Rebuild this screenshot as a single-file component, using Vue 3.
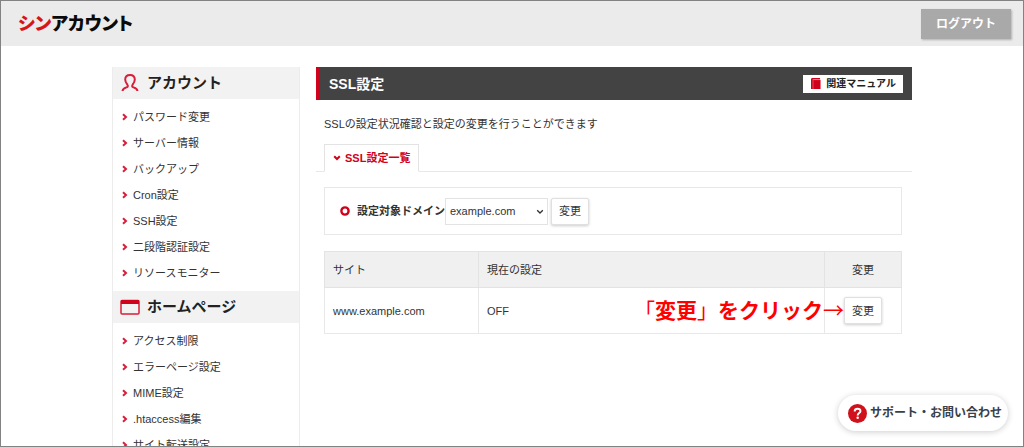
<script setup>
import { ref } from 'vue'

const domain = ref('example.com')
const groups = [
  {
    title: 'アカウント',
    icon: 'person',
    items: ['パスワード変更', 'サーバー情報', 'バックアップ', 'Cron設定', 'SSH設定', '二段階認証設定', 'リソースモニター'],
  },
  {
    title: 'ホームページ',
    icon: 'window',
    items: ['アクセス制限', 'エラーページ設定', 'MIME設定', '.htaccess編集', 'サイト転送設定'],
  },
]
const sites = [{ name: 'www.example.com', status: 'OFF' }]
</script>

<template>
  <div class="page">
    <header class="topbar">
      <a href="#" class="logo"><span class="logo-red">シン</span>アカウント</a>
      <button type="button" class="logout">ログアウト</button>
    </header>

    <div class="container">
      <nav class="sidebar">
        <section v-for="g in groups" :key="g.title">
          <h2 class="group-title">
            <svg v-if="g.icon === 'person'" class="group-icon" viewBox="0 0 20 20" fill="none" stroke="#d81e3a" stroke-width="2">
              <path d="M2.500 18C2.800 15.600 4.500 15.100 6.700 14.300C8.200 13.700 8.100 12.500 7.300 11.500C6.200 10.200 5.200 9 5.200 6.600C5.200 3.600 7 2 10 2C13 2 14.800 3.600 14.800 6.600C14.800 9 13.800 10.200 12.700 11.500C11.900 12.500 11.800 13.700 13.300 14.300C15.500 15.100 17.200 15.600 17.500 18" />
            </svg>
            <svg v-else class="group-icon" viewBox="0 0 20 20">
              <rect x="1" y="3.500" width="18" height="13.500" rx="1" fill="none" stroke="#d81e3a" stroke-width="1.500" />
              <path d="M1 3h18v4H1z" fill="#d0021b" />
            </svg>
            {{ g.title }}
          </h2>
          <ul class="menu">
            <li v-for="item in g.items" :key="item">
              <a href="#">
                <svg class="arrow" viewBox="0 0 6 8" fill="none" stroke="#d81e3a" stroke-width="2"><path d="M1 1.200L4 4L1 6.800" /></svg>
                {{ item }}
              </a>
            </li>
          </ul>
        </section>
      </nav>

      <main class="main">
        <div class="title-bar">
          <h1>SSL設定</h1>
          <a href="#" class="manual">
            <svg class="book" viewBox="0 0 11 12">
              <path d="M1.500 0H10v1.500H2.500v.7H10.500V12H0V1.500Q0 0 1.500 0Z" fill="#d0021b" />
              <path d="M2.200 2.400V12M1.500 1.800H10" stroke="#f08a94" stroke-width=".6" />
            </svg>
            関連マニュアル
          </a>
        </div>
        <p class="lead">SSLの設定状況確認と設定の変更を行うことができます</p>

        <div class="tabs">
          <a href="#list" class="tab">
            <svg class="down" viewBox="0 0 8 6" fill="none" stroke="#d0021b" stroke-width="2"><path d="M1.200 1.200L4 4L6.800 1.200" /></svg>
            SSL設定一覧
          </a>
        </div>

        <div id="list" class="content">
          <form class="filter" @submit.prevent>
            <svg class="ring" viewBox="0 0 10 10"><circle cx="5" cy="5" r="3.600" fill="none" stroke="#d0021b" stroke-width="2.400" /></svg>
            <label for="domain">設定対象ドメイン</label>
            <span class="select-wrap">
              <select id="domain" v-model="domain">
                <option>example.com</option>
              </select>
              <svg class="caret" viewBox="0 0 8 6" fill="none" stroke="#333" stroke-width="1.300"><path d="M1.200 1.200L4 4L6.800 1.200" /></svg>
            </span>
            <button type="submit" class="btn">変更</button>
          </form>

          <table class="sites">
            <thead>
              <tr>
                <th class="col-site">サイト</th>
                <th>現在の設定</th>
                <th class="col-action">変更</th>
              </tr>
            </thead>
            <tbody>
              <tr v-for="s in sites" :key="s.name">
                <td>{{ s.name }}</td>
                <td>{{ s.status }}</td>
                <td class="col-action">
                  <span class="action">
                    <span class="note">「<b>変更</b>」<b>をクリック</b>→</span>
                    <button type="button" class="btn">変更</button>
                  </span>
                </td>
              </tr>
            </tbody>
          </table>
        </div>
      </main>
    </div>

    <a href="#" class="support">
      <svg class="help" viewBox="0 0 20 20">
        <circle cx="10" cy="10" r="10" fill="#d0111b" />
        <path d="M7 7.800C7 5.900 8.200 4.900 10 4.900C11.900 4.900 13.100 6 13.100 7.500C13.100 9.500 10.200 9.600 10.200 12" fill="none" stroke="#fff" stroke-width="2.100" />
        <circle cx="10.200" cy="14.500" r="1.300" fill="#fff" />
      </svg>
      サポート・お問い合わせ
    </a>
  </div>
</template>

<style>
body {
  margin: 0;
}
</style>

<style scoped>
.page {
  position: relative;
  box-sizing: border-box;
  height: 100vh;
  overflow: hidden;
  border: 1px solid #828282;
  background: #fff;
  color: #333;
  font-family: "Liberation Sans", "Noto Sans CJK JP", sans-serif;
  font-size: 11px;
  line-height: 16px;
}
a {
  color: inherit;
  text-decoration: none;
}
button,
select {
  font: inherit;
  color: inherit;
}
.topbar {
  display: flex;
  align-items: center;
  justify-content: space-between;
  height: 45px;
  padding: 0 12px 0 17px;
  background: #ebebeb;
}
.logo {
  color: #0a0a0a;
  font-size: 18px;
  font-weight: 900;
  font-feature-settings: "palt";
  line-height: 24px;
}
.logo-red {
  color: #d7141a;
}
.logout {
  width: 90px;
  height: 30px;
  padding: 0;
  border: 0;
  background: #a9a9a9;
  box-shadow: 1px 1px 2px rgba(0, 0, 0, 0.25);
  color: #fff;
  font-size: 12px;
  font-weight: bold;
}
.container {
  display: flex;
  align-items: flex-start;
  gap: 16px;
  max-width: 800px;
  margin: 21px auto 0;
}
.sidebar {
  box-sizing: border-box;
  flex: 0 0 188px;
  border: solid #ececec;
  border-width: 0 1px;
}
.group-title {
  display: flex;
  align-items: center;
  gap: 7px;
  height: 32px;
  margin: 0;
  padding: 0 7px;
  background: #f2f2f2;
  color: #222;
  font-size: 15px;
  font-weight: bold;
}
.group-icon {
  width: 20px;
  height: 20px;
}
.menu {
  margin: 0;
  padding: 5px 0;
  list-style: none;
}
.menu a {
  display: flex;
  align-items: center;
  gap: 5px;
  padding: 0 9px;
  line-height: 26px;
}
.arrow {
  width: 6px;
  height: 8px;
}
.main {
  flex: 1;
  min-width: 0;
}
.title-bar {
  display: flex;
  align-items: center;
  justify-content: space-between;
  height: 33px;
  padding: 0 9px;
  border-left: 4px solid #d0021b;
  background: #434343;
}
.title-bar h1 {
  margin: 0;
  color: #fff;
  font-size: 14px;
  font-weight: bold;
}
.manual {
  display: flex;
  align-items: center;
  gap: 5px;
  padding: 1px 7px 1px 8px;
  background: #fff;
  color: #222;
  font-size: 10px;
  font-weight: bold;
}
.book {
  width: 10px;
  height: 11px;
}
.lead {
  margin: 16px 8px 12px;
}
.tabs {
  display: flex;
  padding: 0 8px;
  border-bottom: 1px solid #e8e8e8;
}
.tab {
  display: flex;
  align-items: center;
  gap: 4px;
  height: 26px;
  margin-bottom: -1px;
  padding: 0 8px;
  border: 1px solid #e3e3e3;
  border-bottom-color: #fff;
  background: #fff;
  color: #d0021b;
  font-weight: bold;
}
.down,
.caret {
  width: 8px;
  height: 6px;
}
.content {
  padding: 15px 10px 0 8px;
}
.filter {
  display: flex;
  align-items: center;
  height: 46px;
  padding: 0 15px;
  border: 1px solid #e8e8e8;
}
.ring {
  width: 10px;
  height: 10px;
  margin-right: 7px;
}
.filter label {
  font-weight: bold;
}
.select-wrap {
  position: relative;
  margin-right: 3px;
}
.select-wrap select {
  box-sizing: border-box;
  display: block;
  width: 103px;
  height: 27px;
  padding: 0 20px 0 4px;
  border: 1px solid #e3e3e3;
  border-radius: 0;
  appearance: none;
  background: #fff;
}
.caret {
  position: absolute;
  top: 11px;
  right: 4px;
  pointer-events: none;
}
.btn {
  box-sizing: border-box;
  width: 38px;
  height: 27px;
  padding: 0;
  border: 1px solid #e0e0e0;
  border-radius: 2px;
  background: #fff;
  box-shadow: 0 1px 3px rgba(0, 0, 0, 0.2);
}
.sites {
  width: 100%;
  margin-top: 16px;
  border-collapse: collapse;
  table-layout: fixed;
}
.sites th,
.sites td {
  height: 45px;
  padding: 0 8px;
  border: 1px solid #e8e8e8;
  text-align: left;
  font-weight: normal;
}
.sites th {
  height: 35px;
  border-color: #e3e3e3;
  background: #f0f0f0;
}
.sites .col-site {
  width: 137px;
}
.sites .col-action {
  width: 60px;
  text-align: center;
}
.action {
  position: relative;
  display: inline-block;
}
.note {
  position: absolute;
  top: 0;
  right: 100%;
  color: #f00;
  font-family: "Noto Sans CJK JP", sans-serif;
  font-size: 21px;
  line-height: 24px;
  white-space: nowrap;
}
.note b {
  font-weight: bold;
}
.support {
  position: absolute;
  right: 15px;
  bottom: 15px;
  display: flex;
  align-items: center;
  gap: 3px;
  padding: 8px 6px 8px 10px;
  border-radius: 18px;
  background: #fff;
  box-shadow: 0 1px 6px rgba(0, 0, 0, 0.2);
  color: #37414b;
  font-size: 12px;
  font-weight: bold;
  line-height: 20px;
}
.help {
  width: 19px;
  height: 19px;
}
</style>
